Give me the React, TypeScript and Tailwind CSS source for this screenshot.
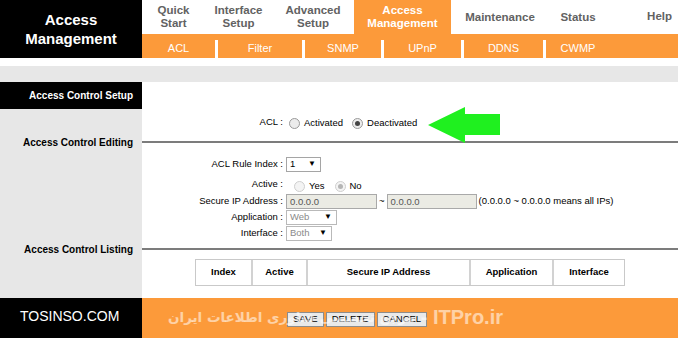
import type { ReactNode } from 'react';

const NAV = [
  { label: ['Quick', 'Start'], w: 'w-[63px]' },
  { label: ['Interface', 'Setup'], w: 'w-[67px]' },
  { label: ['Advanced', 'Setup'], w: 'w-[82px]' },
  { label: ['Access', 'Management'], w: 'w-[97px]', active: true },
  { label: ['Maintenance'], w: 'w-[98px]' },
  { label: ['Status'], w: 'w-[58px]' },
];

const SUBNAV = [
  { label: 'ACL', w: 'w-[73px]' },
  { label: 'Filter', w: 'w-[84px]' },
  { label: 'SNMP', w: 'w-[76px]' },
  { label: 'UPnP', w: 'w-[77px]' },
  { label: 'DDNS', w: 'w-[79px]' },
  { label: 'CWMP', w: 'w-[64px]' },
];

const COLS = [
  { label: 'Index', w: 'w-[55px]' },
  { label: 'Active', w: 'w-[55px]' },
  { label: 'Secure IP Address', w: 'w-[163px]' },
  { label: 'Application', w: 'w-[83px]' },
  { label: 'Interface', w: 'w-[72px]' },
];

function Radio({ checked, faded }: { checked?: boolean; faded?: boolean }) {
  return (
    <span
      className={`inline-flex items-center justify-center w-[11px] h-[11px] rounded-full border ${
        faded ? 'border-[#cfcfcf] bg-[#f4f4f4]' : 'border-[#9a9a9a] bg-[#ececec]'
      }`}
    >
      {checked && <span className={`w-[5px] h-[5px] rounded-full ${faded ? 'bg-[#b5b5b5]' : 'bg-[#444]'}`} />}
    </span>
  );
}

function Select({ value, w, faded }: { value: string; w: string; faded?: boolean }) {
  return (
    <div
      className={`${w} h-[15px] flex items-center justify-between border bg-white pl-[3px] pr-[4px] leading-none ${
        faded ? 'border-[#b9b9b9] text-[#8a8a8a]' : 'border-[#a5a5a5] text-black'
      }`}
    >
      <span>{value}</span>
      <span className="text-[8px] text-black">▼</span>
    </div>
  );
}

function Row({ left, children, h, leftClass = 'bg-[#e7e7e7]' }: { left?: ReactNode; children?: ReactNode; h: string; leftClass?: string }) {
  return (
    <div className={`flex ${h}`}>
      <div className={`w-[142px] shrink-0 flex items-center justify-end pr-[9px] text-[10px] font-bold ${leftClass}`}>{left}</div>
      <div className="flex-1 flex items-center">{children}</div>
    </div>
  );
}

function Field({ label, children }: { label: string; children: ReactNode }) {
  return (
    <>
      <div className="w-[144px] text-right pr-[3px] whitespace-nowrap">{label} :</div>
      {children}
    </>
  );
}

export default function App() {
  return (
    <div className="w-[678px] h-[338px] overflow-hidden bg-white flex flex-col font-['Liberation_Sans',Arial,sans-serif] text-[9.5px] text-black relative">
      {/* header */}
      <div className="flex h-[58px]">
        <div className="w-[142px] bg-black text-white font-bold text-[15px] leading-[19px] flex items-center justify-center text-center">
          Access
          <br />
          Management
        </div>
        <div className="flex-1 flex flex-col">
          <div className="h-[34px] flex">
            {NAV.map((n) => (
              <div
                key={n.label.join(' ')}
                className={`${n.w} flex flex-col items-center justify-center text-[11.5px] font-bold leading-[13px] text-center ${
                  n.active ? 'bg-[#fc9a3a] text-white' : 'text-[#626262]'
                }`}
              >
                {n.label.map((l) => (
                  <span key={l}>{l}</span>
                ))}
              </div>
            ))}
            <div className="flex-1 flex items-center justify-end pr-[6px] text-[11.5px] font-bold text-[#626262]">Help</div>
          </div>
          <div className="h-[24px] bg-[#fc9a3a] flex items-end text-white text-[11px]">
            {SUBNAV.map((s, i) => (
              <div key={s.label} className="flex items-end h-full">
                {i > 0 && <span className="w-[3px] h-[18px] bg-white" />}
                <div className={`${s.w} h-full flex items-center justify-center pt-[4px]`}>{s.label}</div>
              </div>
            ))}
          </div>
        </div>
      </div>

      <div className="h-[8px]" />
      <div className="h-[16px] bg-[#e7e7e7]" />

      {/* body */}
      <Row h="h-[27px]" leftClass="bg-black text-white" left="Access Control Setup" />
      <Row h="h-[26px]">
        <Field label="ACL">
          <div className="flex items-center gap-[4px] pt-[2px] pl-[3px]">
            <Radio />
            <span>Activated</span>
            <span className="w-[1px]" />
            <Radio checked />
            <span>Deactivated</span>
          </div>
        </Field>
      </Row>
      <Row h="h-[14px]" left="Access Control Editing">
        <div className="w-full h-[2px] bg-[#7c7c7c]" />
      </Row>
      <Row h="h-[5px]" />
      <Row h="h-[20px]">
        <Field label="ACL Rule Index">
          <Select value="1" w="w-[35px]" />
        </Field>
      </Row>
      <Row h="h-[20px]">
        <Field label="Active">
          <div className="flex items-center gap-[4px] pt-[4px]">
            <span className="ml-[4px]" />
            <Radio faded />
            <span>Yes</span>
            <span className="w-[2px]" />
            <Radio checked faded />
            <span>No</span>
          </div>
        </Field>
      </Row>
      <Row h="h-[15px]">
        <Field label="Secure IP Address">
          <div className="w-[91px] h-[15px] bg-[#ebebe4] border border-[#a9a9a9] text-[#555] pl-[3px] leading-[13px]">0.0.0.0</div>
          <span className="px-[2px]">~</span>
          <div className="w-[90px] h-[15px] bg-[#ebebe4] border border-[#a9a9a9] text-[#555] pl-[3px] leading-[13px]">0.0.0.0</div>
          <span className="pl-[2px] whitespace-nowrap">(0.0.0.0 ~ 0.0.0.0 means all IPs)</span>
        </Field>
      </Row>
      <Row h="h-[16px]">
        <Field label="Application">
          <Select value="Web" w="w-[51px]" faded />
        </Field>
      </Row>
      <Row h="h-[16px]">
        <Field label="Interface">
          <Select value="Both" w="w-[46px]" faded />
        </Field>
      </Row>
      <Row h="h-[16px]" left="Access Control Listing">
        <div className="w-full h-[2px] bg-[#7c7c7c]" />
      </Row>
      <div className="flex flex-1">
        <div className="w-[142px] bg-[#e7e7e7]" />
        <div className="flex-1 flex justify-center pt-[2px]">
          <div className="flex h-[27px] border border-[#c9c9c9] self-start">
            {COLS.map((c, i) => (
              <div
                key={c.label}
                className={`${c.w} flex items-center justify-center font-bold ${i > 0 ? 'border-l-2 border-[#d2d2d2]' : ''}`}
              >
                {c.label}
              </div>
            ))}
          </div>
        </div>
      </div>

      {/* footer */}
      <div className="h-[40px] flex relative">
        <div className="w-[142px] bg-black text-white text-[14px] flex items-center pl-[20px] pb-[4px]">TOSINSO.COM</div>
        <div className="flex-1 bg-[#fc9a3a] flex items-center pl-[145px] pt-[2px] gap-[2px]">
          {['SAVE', 'DELETE', 'CANCEL'].map((b) => (
            <div
              key={b}
              className="h-[15px] px-[5px] flex items-center bg-[#e9e9e9] border border-[#8c8c8c] text-[9.5px] text-black leading-none"
            >
              {b}
            </div>
          ))}
        </div>
        <div className="absolute left-[168px] top-[9px] flex items-center pointer-events-none text-white/55 font-bold whitespace-nowrap">
          <span dir="rtl" className="font-['DejaVu_Sans',sans-serif] text-[13.5px]">
            مرجع تخصصی فناوری اطلاعات ایران
          </span>
          <span className="text-[20px] leading-none font-['Liberation_Sans',sans-serif]">&nbsp;- ITPro.ir</span>
        </div>
      </div>

      {/* green arrow */}
      <svg className="absolute left-[427px] top-[106px]" width="74" height="38" viewBox="0 0 74 38">
        <path d="M1 19 L38 1 L38 8 L73 8 L73 29 L38 29 L38 37 Z" fill="#1ff01f" />
      </svg>
    </div>
  );
}
